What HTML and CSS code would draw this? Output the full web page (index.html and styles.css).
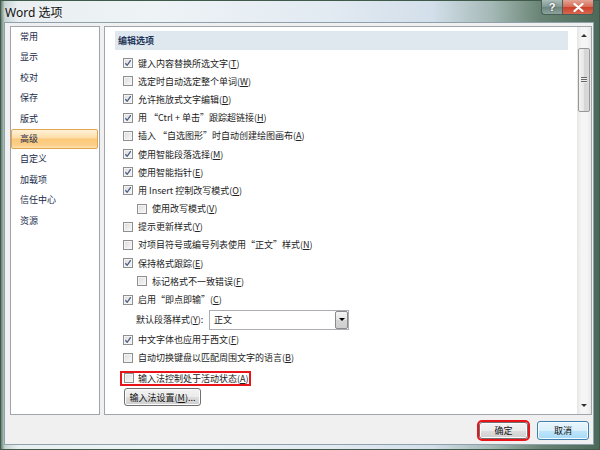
FILE: index.html
```html
<!DOCTYPE html>
<html lang="zh-CN">
<head>
    <meta charset="UTF-8">
    <title>Word 选项</title>
    <link rel="stylesheet" href="styles.css">
</head>
<body>
    <div class="window">
        <!-- Title bar -->
        <div class="titlebar">
            <span class="title">Word 选项</span>
            <div class="caption-btns">
                <span class="cap help">?</span>
                <span class="cap close">
                    <svg width="11" height="9" viewBox="0 0 11 9"><path d="M1.5 1 L9.5 8 M9.5 1 L1.5 8" stroke="#fff" stroke-width="2.2" stroke-linecap="round"/></svg>
                </span>
            </div>
        </div>

        <div class="client">
            <div class="panes">
                <!-- Category list -->
                <ul class="nav">
                    <li>常用</li>
                    <li>显示</li>
                    <li>校对</li>
                    <li>保存</li>
                    <li>版式</li>
                    <li class="active">高级</li>
                    <li>自定义</li>
                    <li>加载项</li>
                    <li>信任中心</li>
                    <li>资源</li>
                </ul>

                <!-- Options -->
                <div class="content">
                    <div class="scroll-area">
                        <div class="section-head">编辑选项</div>
                        <div class="options">
                            <div class="opt"><span class="box checked"></span>键入内容替换所选文字(<u>T</u>)</div>
                            <div class="opt"><span class="box"></span>选定时自动选定整个单词(<u>W</u>)</div>
                            <div class="opt"><span class="box checked"></span>允许拖放式文字编辑(<u>D</u>)</div>
                            <div class="opt"><span class="box checked"></span>用 “Ctrl + 单击”跟踪超链接(<u>H</u>)</div>
                            <div class="opt"><span class="box"></span>插入 “自选图形”时自动创建绘图画布(<u>A</u>)</div>
                            <div class="opt"><span class="box checked"></span>使用智能段落选择(<u>M</u>)</div>
                            <div class="opt"><span class="box checked"></span>使用智能指针(<u>E</u>)</div>
                            <div class="opt"><span class="box checked"></span>用 Insert 控制改写模式(<u>O</u>)</div>
                            <div class="opt sub"><span class="box"></span>使用改写模式(<u>V</u>)</div>
                            <div class="opt"><span class="box"></span>提示更新样式(<u>Y</u>)</div>
                            <div class="opt"><span class="box"></span>对项目符号或编号列表使用“正文”样式(<u>N</u>)</div>
                            <div class="opt"><span class="box checked"></span>保持格式跟踪(<u>E</u>)</div>
                            <div class="opt sub"><span class="box"></span>标记格式不一致错误(<u>F</u>)</div>
                            <div class="opt"><span class="box checked"></span>启用“即点即输”(<u>C</u>)</div>
                            <div class="select-row">
                                <span class="select-label">默认段落样式(<u>Y</u>):</span>
                                <div class="select">
                                    <span class="select-value">正文</span>
                                    <span class="select-arrow"></span>
                                </div>
                            </div>
                            <div class="opt"><span class="box checked"></span>中文字体也应用于西文(<u>F</u>)</div>
                            <div class="opt"><span class="box"></span>自动切换键盘以匹配周围文字的语言(<u>B</u>)</div>
                            <div class="opt marked-row">
                                <span class="mark"><span class="box"></span>输入法控制处于活动状态(<u>A</u>)</span>
                            </div>
                            <div class="btn-row">
                                <button class="btn ime">输入法设置(<u>M</u>)...</button>
                            </div>
                        </div>
                    </div>
                    <div class="scrollbar">
                        <span class="sb-arrow up"></span>
                        <span class="sb-thumb"><span class="grip"></span></span>
                        <span class="sb-fill"></span>
                        <span class="sb-arrow down"></span>
                    </div>
                </div>
            </div>

            <div class="footer">
                <button class="btn ok">确定</button>
                <button class="btn cancel">取消</button>
            </div>
        </div>
    </div>
</body>
</html>
```

FILE: styles.css
```css
* {
    box-sizing: border-box;
}

html, body {
    margin: 0;
    padding: 0;
}

body {
    width: 600px;
    height: 450px;
    overflow: hidden;
    font-family: "Noto Sans CJK SC", "Noto Sans", sans-serif;
    font-size: 9px;
    color: #222;
}

u {
    text-decoration: underline;
    text-underline-offset: 1px;
}

/* Window frame */
.window {
    width: 600px;
    height: 450px;
    display: flex;
    flex-direction: column;
    padding: 0 6px 5px 4px;
    background: linear-gradient(90deg, #4f6c5c 0, #c6d3d2 0.8%, #e9eef1 3%, #eef3f6 25%, #e2eaf2 55%, #d3dfea 72%, #a4b8b5 82%, #6a8576 90%, #4c6858 100%);
    box-shadow: inset 0 0 0 1px #3f5a4b;
}

.titlebar {
    height: 22px;
    display: flex;
    align-items: flex-start;
}

.title {
    padding: 3px 0 0 1px;
    font-family: "Noto Sans", "Noto Sans CJK SC", sans-serif;
    font-size: 12px;
    color: #111;
    text-shadow: 0 0 6px #fff;
}

.caption-btns {
    margin-left: auto;
    display: flex;
}

.cap {
    height: 15px;
    display: flex;
    align-items: center;
    justify-content: center;
    border: 1px solid #4a5d58;
    border-top: none;
}

.help {
    width: 21px;
    border-right: none;
    border-radius: 0 0 0 4px;
    background: linear-gradient(#a9bcb8, #7f9792 50%, #6c847d 51%, #8ea59e);
    color: #fff;
    font-family: "Liberation Sans", sans-serif;
    font-weight: bold;
    font-size: 11px;
    text-shadow: 0 0 2px #333;
}

.close {
    width: 32px;
    border-radius: 0 0 4px 0;
    background: linear-gradient(#e3a597, #d66a55 50%, #c8402a 51%, #d9674f);
}

/* Client area */
.client {
    flex: 1;
    display: flex;
    flex-direction: column;
    background: #f0f0f0;
    border: 1px solid #8fa1ad;
}

.panes {
    height: 392px;
    display: flex;
    padding: 3px 1px 0 5px;
}

.nav {
    width: 90px;
    margin: 0;
    padding: 0;
    list-style: none;
    background: #fff;
    border: 1px solid #a0a4ab;
}

.nav li {
    height: 20.4px;
    line-height: 20px;
    padding-left: 9px;
    margin-right: 1px;
    color: #1b2c4a;
}

.nav li.active {
    padding-left: 8px;
    border: 1px solid #e0a54e;
    border-radius: 2px;
    background: linear-gradient(#fff2d9, #fddca6 45%, #fbc878 50%, #fbd08a 85%, #fde2b4);
    line-height: 18px;
}

.content {
    flex: 1;
    margin-left: 4px;
    display: flex;
    background: #fff;
    border: 1px solid #a0a4ab;
}

.scroll-area {
    flex: 1;
    padding: 4px 9px 0 10px;
}

.section-head {
    height: 19px;
    line-height: 19px;
    padding-left: 3px;
    background: #dfe8ef;
    color: #1e3559;
    font-weight: bold;
}

.options {
    margin-top: 4px;
}

.opt {
    height: 18.2px;
    display: flex;
    align-items: center;
    padding-left: 8px;
    white-space: nowrap;
}

.opt.sub {
    padding-left: 22px;
}

/* Checkbox */
.box {
    width: 10px;
    height: 10px;
    margin-right: 5px;
    flex: none;
    border: 1px solid #8e8f8f;
    background: linear-gradient(135deg, #dcdcdc, #f8f8f8);
    box-shadow: inset 0 0 0 1px #f4f4f4;
}

.box.checked {
    background: url("data:image/svg+xml,%3Csvg xmlns='http://www.w3.org/2000/svg' width='8' height='8' viewBox='0 0 8 8'%3E%3Cpath d='M1.3 4.2 L3.2 6.3 L6.8 1.2' fill='none' stroke='%234a5e86' stroke-width='1.3'/%3E%3C/svg%3E") center / 8px 8px no-repeat, linear-gradient(135deg, #dcdcdc, #f8f8f8);
}

.select-row {
    height: 22px;
    display: flex;
    align-items: center;
    padding-left: 21px;
}

.select-label {
    width: 73px;
}

.select {
    width: 140px;
    height: 20px;
    display: flex;
    border: 1px solid #abadb3;
    background: #fff;
}

.select-value {
    flex: 1;
    line-height: 18px;
    padding-left: 4px;
}

.select-arrow {
    width: 13px;
    border: 1px solid #8a8a8a;
    border-radius: 2px;
    background: linear-gradient(#f4f4f4, #e4e4e4 50%, #d6d6d6 51%, #cfcfcf);
    display: flex;
    align-items: center;
    justify-content: center;
}

.select-arrow::after {
    content: "";
    border-left: 3px solid transparent;
    border-right: 3px solid transparent;
    border-top: 3px solid #000;
}

.marked-row {
    align-items: flex-start;
    padding-top: 3.6px;
    padding-left: 5px;
}

.mark {
    display: flex;
    align-items: center;
    height: 15px;
    padding: 0 0 0 2px;
    border: 2px solid #e8141a;
}

.mark .box {
    margin-right: 4px;
}

.btn-row {
    margin-top: 3px;
    padding-left: 9px;
}

/* Buttons */
.btn {
    font-family: "Noto Sans CJK SC", "Noto Sans", sans-serif;
    font-size: 9px;
    color: #111;
    padding: 0;
    border: 1px solid #707070;
    border-radius: 3px;
    background: linear-gradient(#f2f2f2, #ebebeb 50%, #dddddd 51%, #cfcfcf);
    box-shadow: inset 0 0 0 1px #fcfcfc;
}

.btn.ime {
    width: 77px;
    height: 18px;
}

.footer {
    flex: 1;
    display: flex;
    justify-content: flex-end;
    align-items: flex-start;
    gap: 9px;
    padding: 6px 4px 0 0;
}

.btn.ok {
    width: 49px;
    height: 17px;
    margin-top: 1px;
    outline: 2px solid #e8141a;
}

.btn.cancel {
    width: 52px;
    height: 19px;
    border-color: #3c7fb1;
    background: linear-gradient(#eaf6fd, #d9f0fc 50%, #bee6fd 51%, #a7d9f5);
    box-shadow: inset 0 0 0 1px #f3fbff;
}

/* Scrollbar */
.scrollbar {
    width: 14px;
    display: flex;
    flex-direction: column;
    align-items: center;
    background: linear-gradient(90deg, #e6e6e6, #f5f5f5 30%, #f5f5f5 70%, #e8e8e8);
}

.sb-arrow {
    height: 17px;
    display: flex;
    align-items: center;
    justify-content: center;
}

.sb-arrow.up::after {
    content: "";
    border-left: 3px solid transparent;
    border-right: 3px solid transparent;
    border-bottom: 3px solid #333;
}

.sb-arrow.down::after {
    content: "";
    border-left: 3px solid transparent;
    border-right: 3px solid transparent;
    border-top: 3px solid #333;
}

.sb-thumb {
    width: 12px;
    height: 64px;
    margin-top: 4px;
    display: flex;
    align-items: center;
    justify-content: center;
    border: 1px solid #979797;
    border-radius: 2px;
    background: linear-gradient(90deg, #f3f3f3, #e6e6e6 50%, #d5d5d5 51%, #d9d9d9);
}

.grip {
    width: 6px;
    height: 6px;
    background: repeating-linear-gradient(#666 0 1px, #eee 1px 2px);
}

.sb-fill {
    flex: 1;
}
```
